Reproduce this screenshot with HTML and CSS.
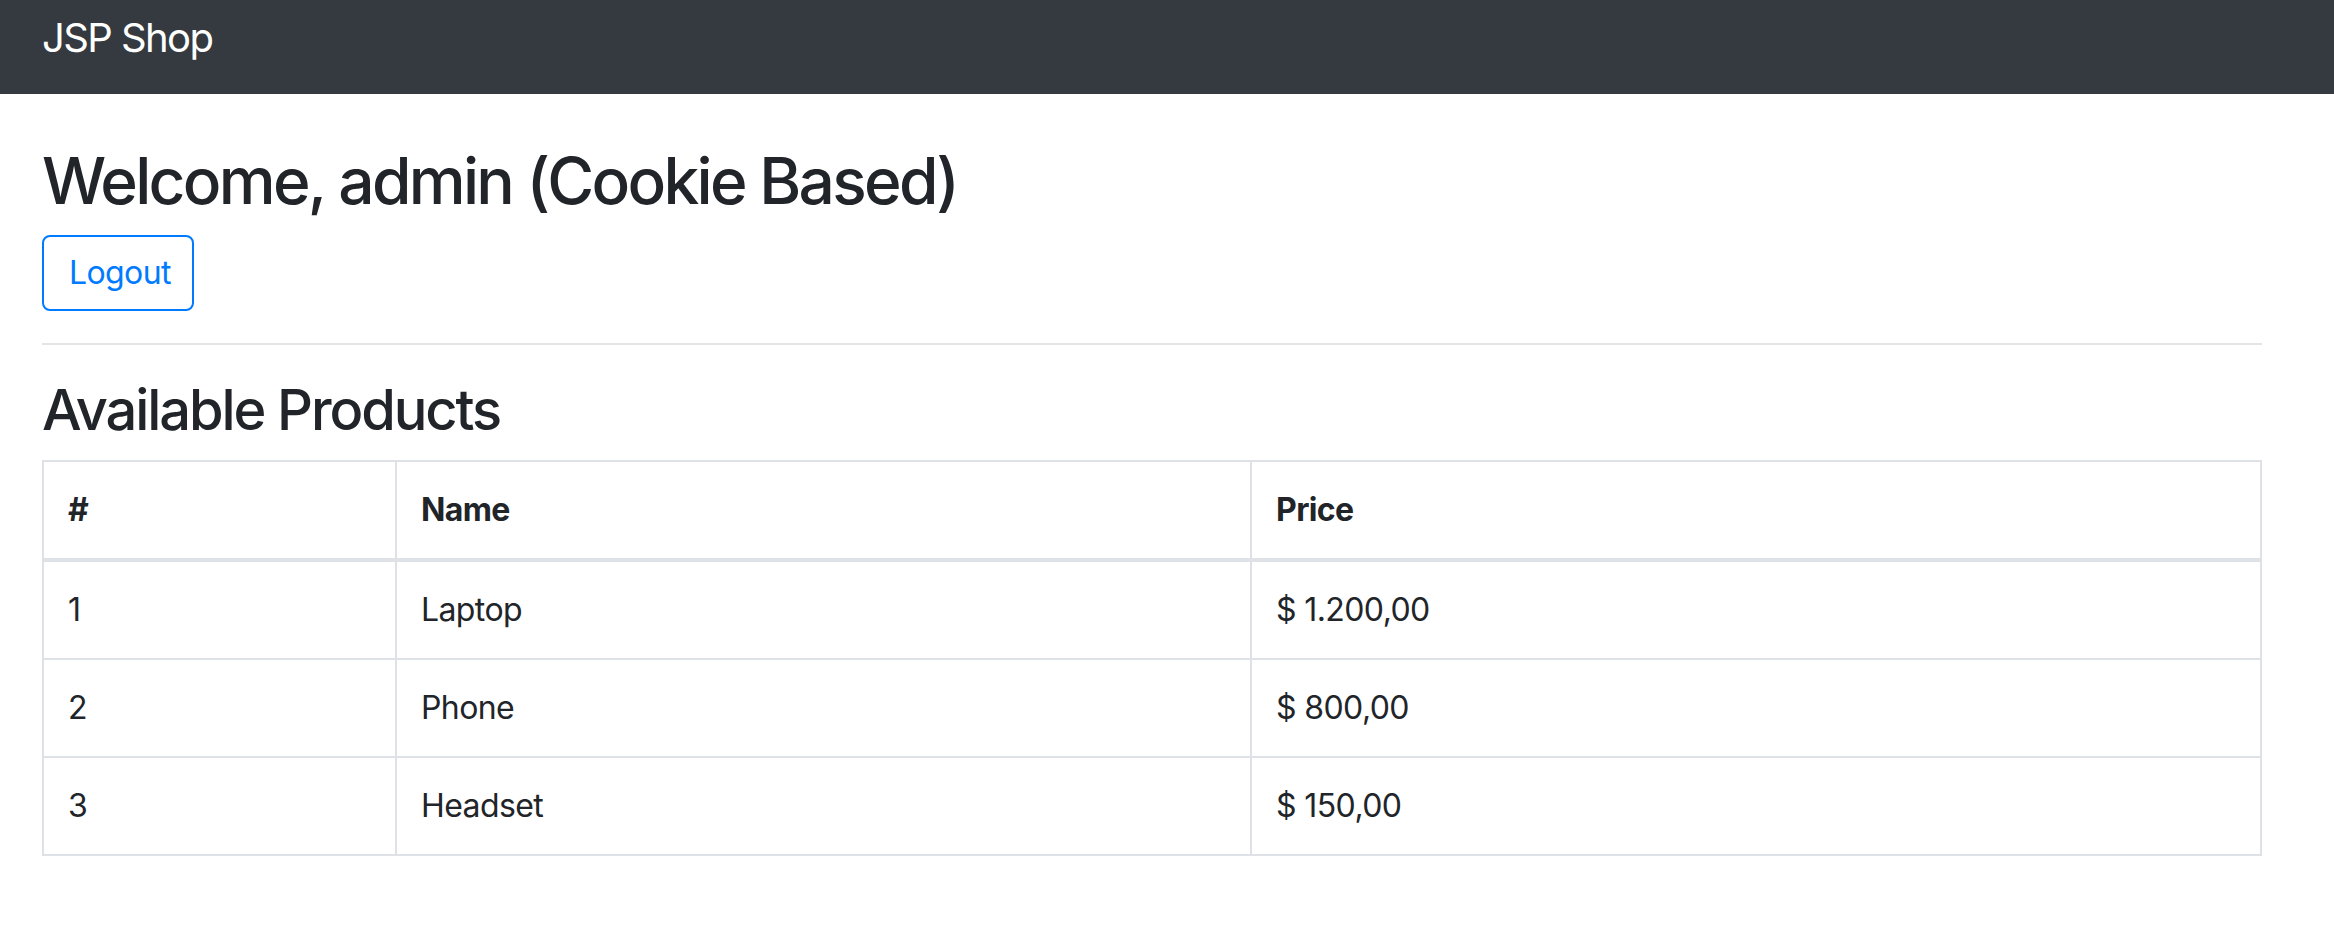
FILE: index.html
```html
<!DOCTYPE html>
<html lang="en">
<head>
<meta charset="utf-8">
<title>JSP Shop</title>
<link rel="stylesheet" href="styles.css">
</head>
<body>
<nav class="navbar">
  <div class="container">
    <a class="brand" href="#">JSP Shop</a>
  </div>
</nav>
<main class="container main">
  <h2 class="welcome">Welcome, admin (Cookie Based)</h2>
  <a class="btn-outline" href="#">Logout</a>
  <hr class="divider">
  <h3 class="section-title">Available Products</h3>
  <table class="products">
    <thead>
      <tr><th class="col-id">#</th><th class="col-name">Name</th><th>Price</th></tr>
    </thead>
    <tbody>
      <tr><td>1</td><td>Laptop</td><td>$ 1.200,00</td></tr>
      <tr><td>2</td><td>Phone</td><td>$ 800,00</td></tr>
      <tr><td>3</td><td>Headset</td><td>$ 150,00</td></tr>
    </tbody>
  </table>
</main>
</body>
</html>
```
FILE: styles.css
```css
* { box-sizing: border-box; }
html, body { margin: 0; padding: 0; }
body {
  font-family: Inter, "Noto Sans", sans-serif;
  font-size: 32px;
  line-height: 48px;
  letter-spacing: -0.6px;
  color: #212529;
  background: #fff;
}
.container {
  width: 2220px;
  margin-left: 42px;
}
.navbar {
  background: #343a40;
  height: 94px;
  padding-top: 8px;
}
.brand {
  display: inline-block;
  font-size: 40px;
  line-height: 60px;
  letter-spacing: -1.6px;
  color: #fff;
  text-decoration: none;
}
.main { padding-top: 48px; }
.welcome {
  margin: 0 0 16px;
  font-size: 64px;
  line-height: 77px;
  font-weight: 550;
  letter-spacing: -2.7px;
}
.btn-outline {
  display: inline-block;
  width: 152px;
  height: 76px;
  padding: 12px 0 0 25px;
  border: 2px solid #007bff;
  border-radius: 8px;
  color: #007bff;
  font-size: 32px;
  line-height: 48px;
  text-decoration: none;
}
.divider {
  margin: 32px 0 32px;
  border: 0;
  border-top: 2px solid rgba(0,0,0,0.1);
  height: 0;
}
.section-title {
  margin: 0 0 16px;
  font-size: 56px;
  line-height: 67px;
  font-weight: 550;
  letter-spacing: -2.1px;
}
.products {
  width: 2220px;
  border-collapse: collapse;
  border: 2px solid #dee2e6;
}
.products th, .products td {
  border: 2px solid #dee2e6;
  padding: 24px;
  text-align: left;
  vertical-align: top;
}
.products th { font-weight: 700; border-bottom-width: 4px; }
.col-id { width: 353px; }
.col-name { width: 855px; }
```
